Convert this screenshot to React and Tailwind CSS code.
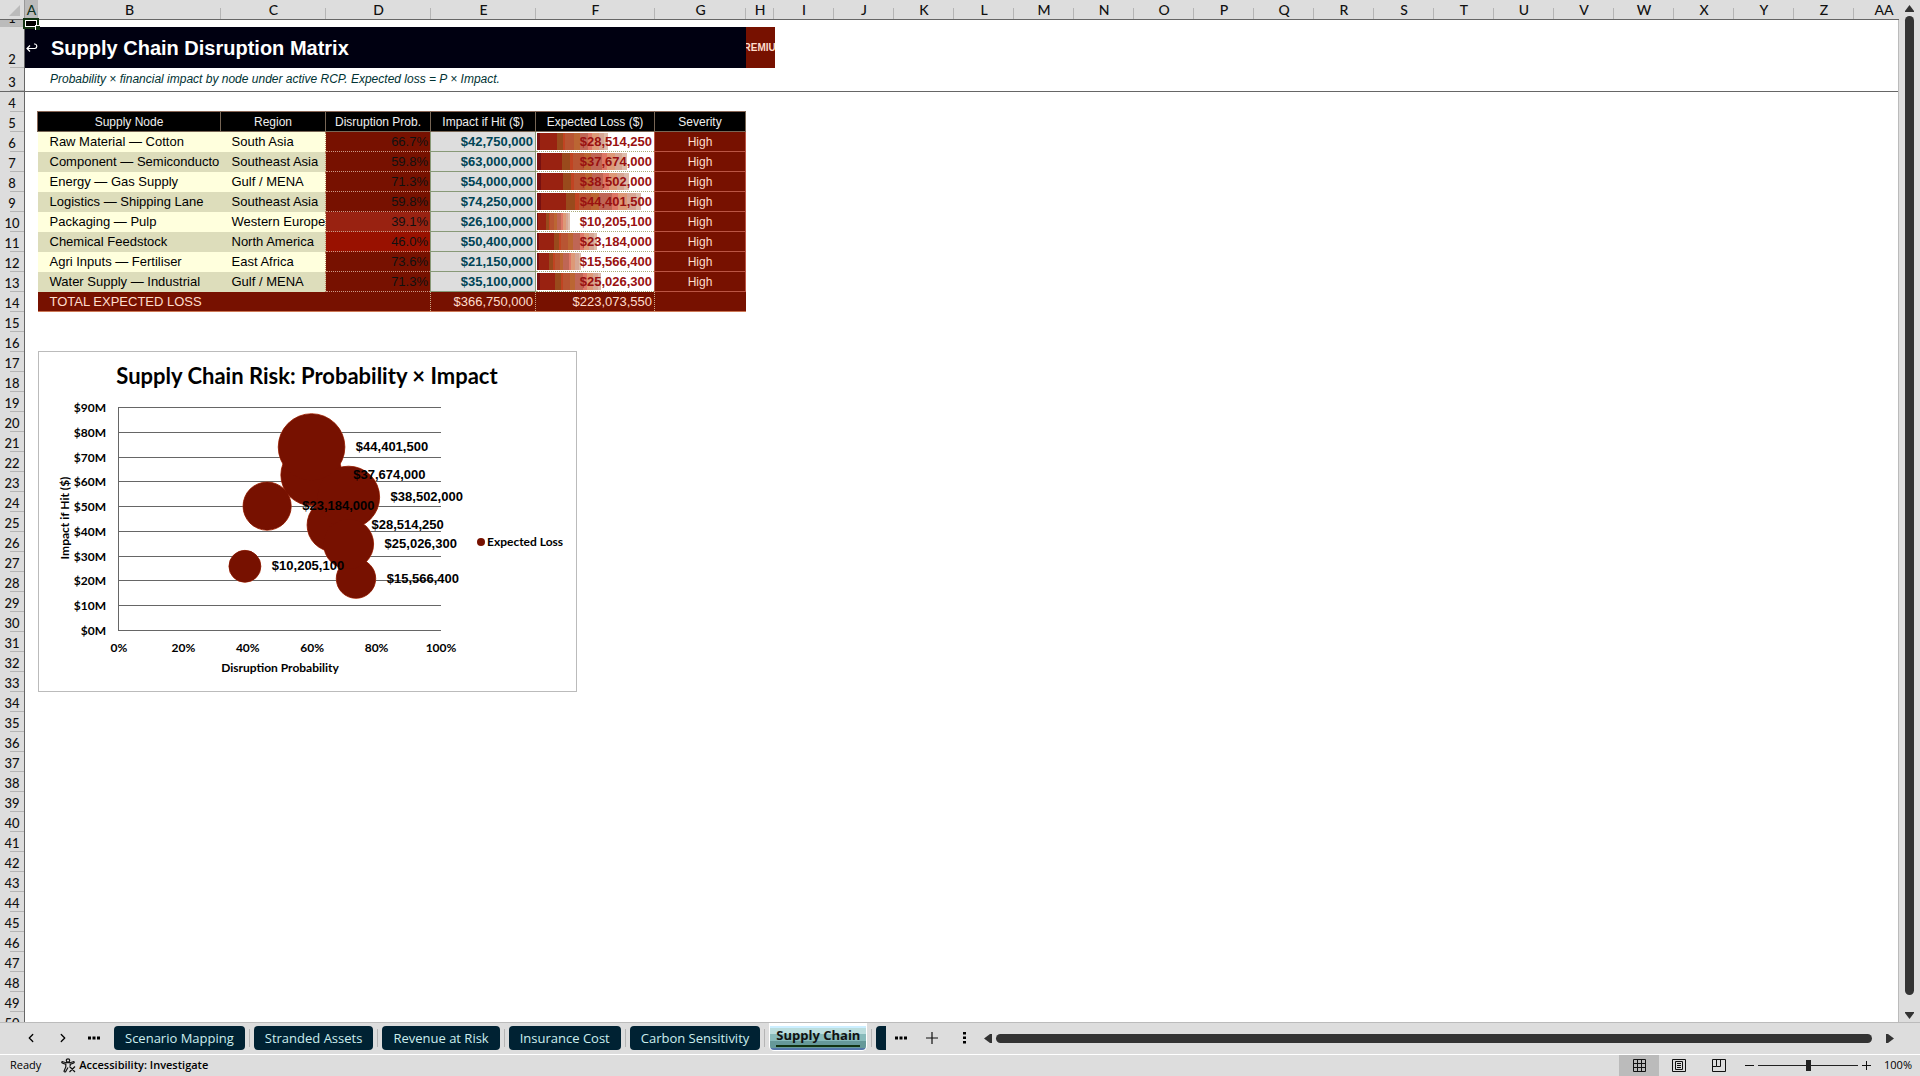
import React from 'react';
import { ChevronLeft, ChevronRight } from 'lucide-react';

const columns = [
  { name: 'A', width: 'w-[13px]', active: true },
  { name: 'B', width: 'w-[183px]' },
  { name: 'C', width: 'w-[105px]' },
  { name: 'D', width: 'w-[105px]' },
  { name: 'E', width: 'w-[105px]' },
  { name: 'F', width: 'w-[119px]' },
  { name: 'G', width: 'w-[91px]' },
  { name: 'H', width: 'w-[28px]' },
  ...'IJKLMNOPQRSTUVWXYZ'.split('').map((name) => ({ name, width: 'w-[60px]' })),
  { name: 'AA', width: 'w-[60px]' },
];

const rowHeights = { 1: 'h-[7px]', 2: 'h-[41px]', 3: 'h-[24px]' };

const nodes = [
  { node: 'Raw Material — Cotton', region: 'South Asia', prob: 66.7, impact: 42750000, loss: 28514250 },
  { node: 'Component — Semiconducto', region: 'Southeast Asia', prob: 59.8, impact: 63000000, loss: 37674000 },
  { node: 'Energy — Gas Supply', region: 'Gulf / MENA', prob: 71.3, impact: 54000000, loss: 38502000 },
  { node: 'Logistics — Shipping Lane', region: 'Southeast Asia', prob: 59.8, impact: 74250000, loss: 44401500 },
  { node: 'Packaging — Pulp', region: 'Western Europe', prob: 39.1, impact: 26100000, loss: 10205100 },
  { node: 'Chemical Feedstock', region: 'North America', prob: 46.0, impact: 50400000, loss: 23184000 },
  { node: 'Agri Inputs — Fertiliser', region: 'East Africa', prob: 73.6, impact: 21150000, loss: 15566400 },
  { node: 'Water Supply — Industrial', region: 'Gulf / MENA', prob: 71.3, impact: 35100000, loss: 25026300 },
];

const money = (value) => `$${value.toLocaleString('en-US')}`;

const probColor = (prob) => {
  if (prob < 40) return 'bg-[#992211]';
  if (prob < 50) return 'bg-[#991100]';
  return 'bg-[#771100]';
};

const ColumnHeaders = () => (
  <div className="flex h-5 shrink-0 overflow-hidden border-b border-[#666] bg-[#ddd]">
    <div className="flex w-[25px] shrink-0 items-end justify-end border-r border-[#999] pr-1 pb-[3px]">
      <svg width="11" height="11" viewBox="0 0 11 11" aria-hidden="true">
        <path d="M11 0V11H0Z" fill="#bbb" />
      </svg>
    </div>
    {columns.map((col) => (
      <div
        key={col.name}
        className={`relative flex shrink-0 items-center justify-center text-[14px] leading-none font-medium after:absolute after:right-0 after:bottom-0 after:h-[11px] after:w-px after:bg-[#b5b5b5] ${col.width} ${col.active ? 'bg-[#bbb] text-[#132]' : 'text-[#111]'}`}
      >
        {col.name}
      </div>
    ))}
  </div>
);

const RowHeaders = () => (
  <div className="w-[25px] shrink-0 overflow-hidden border-r border-[#666] bg-[#ddd]">
    {Array.from({ length: 50 }, (_, i) => i + 1).map((n) => (
      <div
        key={n}
        className={`relative flex items-end justify-center overflow-hidden text-[13px] leading-[18px] font-medium text-[#111] after:absolute after:right-0 after:bottom-0 after:h-px after:w-[14px] after:bg-[#b5b5b5] ${rowHeights[n] || 'h-5'} ${n === 1 ? 'bg-[#bbb]' : ''} ${n === 3 ? 'border-b border-[#666]' : ''}`}
      >
        {n}
      </div>
    ))}
  </div>
);

const LossBar = ({ value }) => (
  <div
    className="absolute top-px bottom-px left-px bg-[linear-gradient(90deg,#771111_0_4%,#992211_4%_28%,#994a1c_28%_37%,#c04422_37%_40%,#b85533_40%_52%,#bb6633_52%_60%,#bf6655_60%_72%,#dd7766_72%_78%,#dd9977_78%_87%,#d6a694_87%_95%,#ddbbaa_95%_100%)]"
    style={{ width: `${Math.round(10 + (value / 44401500) * 78)}%` }}
  ></div>
);

const head = 'border-r border-b border-r-[#776655] border-b-[#776655] text-center font-normal text-[#eee]';

const NodeTable = () => (
  <table className="-ml-px w-[708px] table-fixed border-collapse text-[13px] leading-none whitespace-nowrap">
    <colgroup>
      <col className="w-[183px]" />
      <col className="w-[105px]" />
      <col className="w-[105px]" />
      <col className="w-[105px]" />
      <col className="w-[119px]" />
      <col className="w-[91px]" />
    </colgroup>
    <thead>
      <tr className="h-5 border-t border-l border-[#886655] bg-black text-[12px]">
        <th className={head}>Supply Node</th>
        <th className={head}>Region</th>
        <th className={head}>Disruption Prob.</th>
        <th className={head}>Impact if Hit ($)</th>
        <th className={head}>Expected Loss ($)</th>
        <th className={head}>Severity</th>
      </tr>
    </thead>
    <tbody>
      {nodes.map((row, i) => (
        <tr key={row.node} className={`h-5 ${i % 2 ? 'bg-[#ddddbb]' : 'bg-[#ffffdd]'}`}>
          <td className="p-0 pl-3 text-black">{row.node}</td>
          <td className="border-r border-dotted border-r-[#bb8866] p-0 pl-[11px] text-black">{row.region}</td>
          <td className={`border-b border-dotted border-b-[#cc9988] p-0 pr-[2px] text-right text-[#111] ${probColor(row.prob)}`}>
            {row.prob.toFixed(1)}%
          </td>
          <td className="border border-[#889977] bg-[#ddd] p-0 pr-[2px] text-right font-bold text-[#004455]">
            {money(row.impact)}
          </td>
          <td className="relative border border-dotted border-[#aaaa77] bg-white p-0 pr-[2px] text-right font-bold text-[#991111]">
            <LossBar value={row.loss} />
            <span className="relative">{money(row.loss)}</span>
          </td>
          <td className="border border-[#bb5544] bg-[#771100] p-0 text-center text-[12px] text-[#ffddcc]">High</td>
        </tr>
      ))}
    </tbody>
    <tfoot>
      <tr className="h-5 border-b border-[#cc7755] bg-[#771100] text-[#ffddcc]">
        <th colSpan={3} className="p-0 pl-3 text-left font-medium">TOTAL EXPECTED LOSS</th>
        <td className="border-x border-dotted border-[#ccaa88] p-0 pr-[2px] text-right">$366,750,000</td>
        <td className="border-x border-dotted border-[#ccaa88] p-0 pr-[2px] text-right">$223,073,550</td>
        <td></td>
      </tr>
    </tfoot>
  </table>
);

// plot area of the bubble chart
const plot = { left: 80, right: 402, top: 56, bottom: 279 };
const toX = (prob) => plot.left + (prob / 100) * (plot.right - plot.left);
const toY = (impact) => plot.bottom - (impact / 90000000) * (plot.bottom - plot.top);
const toR = (loss) => Math.sqrt(loss / 1000000) * 5;

const BubbleChart = () => (
  <div className="w-[539px] border border-[#bbb] bg-white">
    <svg className="block w-full font-[Lato,sans-serif] font-bold" viewBox="0 0 537 339" role="img" aria-label="Supply Chain Risk: Probability × Impact">
      <text x="268" y="32" textAnchor="middle" fontSize="22">Supply Chain Risk: Probability × Impact</text>
      {[0, 10, 20, 30, 40, 50, 60, 70, 80, 90].map((v) => (
        <g key={v}>
          <line x1={plot.left} x2={plot.right} y1={Math.round(toY(v * 1000000)) - 0.5} y2={Math.round(toY(v * 1000000)) - 0.5} stroke="#666" />
          <text x="67" y={toY(v * 1000000) + 4} textAnchor="end" fontSize="12">{`$${v}M`}</text>
        </g>
      ))}
      <line x1={plot.left - 0.5} x2={plot.left - 0.5} y1={plot.top - 1} y2={plot.bottom} stroke="#666" />
      {[0, 20, 40, 60, 80, 100].map((v) => (
        <text key={v} x={toX(v)} y="300" textAnchor="middle" fontSize="12">{`${v}%`}</text>
      ))}
      <text x="241" y="320" textAnchor="middle" fontSize="12">Disruption Probability</text>
      <text x="-166" y="30" textAnchor="middle" fontSize="12" transform="rotate(-90)">Impact if Hit ($)</text>
      <g fill="none" stroke="#bb4422">
        {nodes.map((row) => (
          <circle key={row.node} cx={toX(row.prob)} cy={toY(row.impact)} r={toR(row.loss)} />
        ))}
      </g>
      <g fill="#771100">
        {nodes.map((row) => (
          <circle key={row.node} cx={toX(row.prob)} cy={toY(row.impact)} r={toR(row.loss)} />
        ))}
      </g>
      <g fontFamily="Liberation Sans, sans-serif" fontSize="13">
        {nodes.map((row) => (
          <text key={row.node} x={toX(row.prob) + toR(row.loss) + 11} y={toY(row.impact) + 4}>{money(row.loss)}</text>
        ))}
      </g>
      <circle cx="442" cy="190" r="4" fill="#771100" />
      <text x="448" y="194" fontSize="12">Expected Loss</text>
    </svg>
  </div>
);

const Sheet = () => (
  <div className="relative min-w-0 flex-1 overflow-hidden border-r border-[#bbb] bg-white font-['Liberation_Sans',sans-serif]">
    <div className="h-[7px]"></div>
    <div className="flex h-[41px] items-center">
      <div className="flex h-full w-[721px] items-center bg-[#000011] text-white">
        <a href="#index" className="flex w-[13px] justify-end text-white" aria-label="Back to index">
          <svg width="12" height="11" viewBox="0 0 12 11" fill="none" stroke="#fff" strokeWidth="1.2">
            <path d="M4 3.5 1 6.5 4 9.5M1 6.5H9A2.3 2.3 0 0 0 9 2H8" />
          </svg>
        </a>
        <h1 className="pl-[13px] text-[20px] leading-6 font-bold">Supply Chain Disruption Matrix</h1>
      </div>
      <div className="flex h-full w-[29px] items-center justify-center overflow-hidden bg-[#771100] text-[10px] font-bold text-[#ffddcc]">
        PREMIUM
      </div>
    </div>
    <p className="h-6 border-b border-[#666] pl-[25px] text-[12px] leading-[22px] text-[#003333] italic">
      Probability × financial impact by node under active RCP. Expected loss = P × Impact.
    </p>
    <div className="flex flex-col gap-[39px] pt-[19px] pl-[13px]">
      <NodeTable />
      <BubbleChart />
    </div>
  </div>
);

const VerticalScroll = () => (
  <div className="flex w-[21px] shrink-0 flex-col items-center gap-1 bg-[#ddd] pt-[5px] pb-[3px]">
    <svg width="9" height="7" viewBox="0 0 9 7" aria-hidden="true"><path d="M4.5 0 9 6V7H0V6Z" fill="#333" /></svg>
    <div className="w-[9px] flex-1 rounded-full bg-[#333]"></div>
    <svg className="mt-[13px]" width="9" height="7" viewBox="0 0 9 7" aria-hidden="true"><path d="M4.5 7 9 1V0H0V1Z" fill="#333" /></svg>
  </div>
);

const SheetTab = ({ children }) => (
  <button className="h-6 shrink-0 rounded-[4px] bg-[#002233] px-[11px] text-[13px] leading-none text-[#cceeee]">
    {children}
  </button>
);

const Divider = () => <span className="mx-1 h-[18px] w-px shrink-0 bg-[#b5b5b5]"></span>;

const TabBar = () => (
  <div className="flex h-8 shrink-0 items-center border-t border-[#bbb] bg-[#ddd] pb-px font-['Open_Sans',sans-serif]">
    <button aria-label="Previous sheet" className="ml-6"><ChevronLeft size={14} strokeWidth={2.2} /></button>
    <button aria-label="Next sheet" className="ml-[18px]"><ChevronRight size={14} strokeWidth={2.2} /></button>
    <button aria-label="More sheets" className="mr-[14px] ml-[18px]">
      <svg width="12" height="4" viewBox="0 0 12 4"><path d="M0 .5H3V3.5H0ZM4.5 .5H7.5V3.5H4.5ZM9 .5H12V3.5H9Z" /></svg>
    </button>
    <SheetTab>Scenario Mapping</SheetTab>
    <Divider />
    <SheetTab>Stranded Assets</SheetTab>
    <Divider />
    <SheetTab>Revenue at Risk</SheetTab>
    <Divider />
    <SheetTab>Insurance Cost</SheetTab>
    <Divider />
    <SheetTab>Carbon Sensitivity</SheetTab>
    <Divider />
    <button className="-mt-[3px] flex h-7 shrink-0 items-center rounded-b-[5px] border border-t-0 border-white bg-[linear-gradient(#fff_0_3px,#cceeff_3px_5px,#bbdddd_5px_11px,#88bbbb_11px_18px,#669999_18px_25px,#5577aa_25px)] px-[6px] text-[13px] leading-none font-bold text-[#111]">
      <span className="border-b-2 border-[#113311] pt-1 pb-[3px]">Supply Chain</span>
    </button>
    <Divider />
    <span className="h-6 w-[10px] shrink-0 rounded-l-[4px] bg-[#002233]"></span>
    <button aria-label="Hidden sheets" className="ml-[9px]">
      <svg width="12" height="4" viewBox="0 0 12 4"><path d="M0 .5H3V3.5H0ZM4.5 .5H7.5V3.5H4.5ZM9 .5H12V3.5H9Z" /></svg>
    </button>
    <button aria-label="New sheet" className="ml-[19px]">
      <svg width="12" height="12" viewBox="0 0 12 12"><path d="M6 0V12M0 6H12" stroke="#111" strokeWidth="1.2" /></svg>
    </button>
    <svg className="ml-[25px] shrink-0" width="3" height="12" viewBox="0 0 3 12" aria-hidden="true"><path d="M0 0H3V2.5H0ZM0 4.5H3V7H0ZM0 9H3V11.5H0Z" /></svg>
    <svg className="ml-[18px] shrink-0" width="8" height="9" viewBox="0 0 8 9" aria-hidden="true"><path d="M0 4.5 6 0H8V9H6Z" fill="#333" /></svg>
    <div className="mr-[14px] ml-1 h-[9px] flex-1 rounded-full bg-[#333]"></div>
    <svg className="mr-[26px] shrink-0" width="8" height="9" viewBox="0 0 8 9" aria-hidden="true"><path d="M8 4.5 2 0H0V9H2Z" fill="#333" /></svg>
  </div>
);

const StatusBar = () => (
  <div className="flex h-[22px] shrink-0 items-center border-t border-white bg-[#ddd] font-['Open_Sans',sans-serif] text-[11px] text-black">
    <span className="pl-[10px]">Ready</span>
    <button className="ml-5 flex items-center gap-[3px] font-semibold">
      <svg width="15" height="15" viewBox="0 0 15 15" fill="none" stroke="#111" strokeWidth="1.2" aria-hidden="true">
        <circle cx="7" cy="2.5" r="1.7" />
        <path d="M1 3.5C.2 5 1.5 5.3 4.8 6.2V9L3 13.2C3.6 14.5 4.6 14 5 13L7 9.5M13 3.5C13.8 5 12.5 5.3 9.2 6.2V8M1 3.5 5 4.7H9L13 3.5M8.5 8.5 14 14M14 8.5 8.5 14" />
      </svg>
      Accessibility: Investigate
    </button>
    <div className="ml-auto flex h-full items-center">
      <button aria-label="Normal view" className="flex h-full w-10 items-center justify-center bg-[#bbb]">
        <svg width="13" height="13" viewBox="0 0 13 13" fill="none" stroke="#111"><path d="M.5 .5H12.5V12.5H.5ZM4.5 .5V12.5M8.5 .5V12.5M.5 4.5H12.5M.5 8.5H12.5" /></svg>
      </button>
      <button aria-label="Page layout" className="flex h-full w-10 items-center justify-center">
        <svg width="14" height="13" viewBox="0 0 14 13" fill="none" stroke="#111"><path d="M.5 .5H13.5V12.5H.5ZM3.5 2.5H10.5V10.5H3.5ZM5 4.5H9M5 6.5H9M5 8.5H9" /></svg>
      </button>
      <button aria-label="Page break preview" className="flex h-full w-10 items-center justify-center">
        <svg width="14" height="13" viewBox="0 0 14 13" fill="none" stroke="#111"><path d="M.5 .5H13.5V12.5H.5ZM4.5 .5V7.5H.5M8.5 .5V7.5H4.5" /></svg>
      </button>
      <button aria-label="Zoom out" className="ml-[6px]">
        <svg width="9" height="9" viewBox="0 0 9 9"><path d="M0 4.5H9" stroke="#111" /></svg>
      </button>
      <input
        type="range"
        min="10"
        max="190"
        defaultValue="100"
        aria-label="Zoom"
        className="mx-1 h-3 w-[100px] appearance-none bg-[linear-gradient(#222,#222)] bg-[length:100%_1px] bg-center bg-no-repeat [&::-webkit-slider-thumb]:h-[11px] [&::-webkit-slider-thumb]:w-[5px] [&::-webkit-slider-thumb]:appearance-none [&::-webkit-slider-thumb]:bg-[#222]"
      />
      <button aria-label="Zoom in">
        <svg width="9" height="9" viewBox="0 0 9 9"><path d="M0 4.5H9M4.5 0V9" stroke="#111" /></svg>
      </button>
      <span className="mr-2 ml-[13px]">100%</span>
    </div>
  </div>
);

export default function App() {
  return (
    <div className="flex h-screen flex-col overflow-hidden bg-[#ddd] font-[Lato,sans-serif]">
      <div className="flex min-h-0 flex-1">
        <div className="relative flex min-w-0 flex-1 flex-col">
          <ColumnHeaders />
          <div className="flex min-h-0 flex-1">
            <RowHeaders />
            <Sheet />
          </div>
          {/* selected cell */}
          <div className="absolute top-[18px] left-[23px] h-[11px] w-4 border-2 border-[#113311] bg-black outline-1 -outline-offset-3 outline-white">
            <span className="absolute -right-[3px] -bottom-[3px] size-[5px] border-t border-l border-white bg-[#113311]"></span>
          </div>
        </div>
        <VerticalScroll />
      </div>
      <TabBar />
      <StatusBar />
    </div>
  );
}
